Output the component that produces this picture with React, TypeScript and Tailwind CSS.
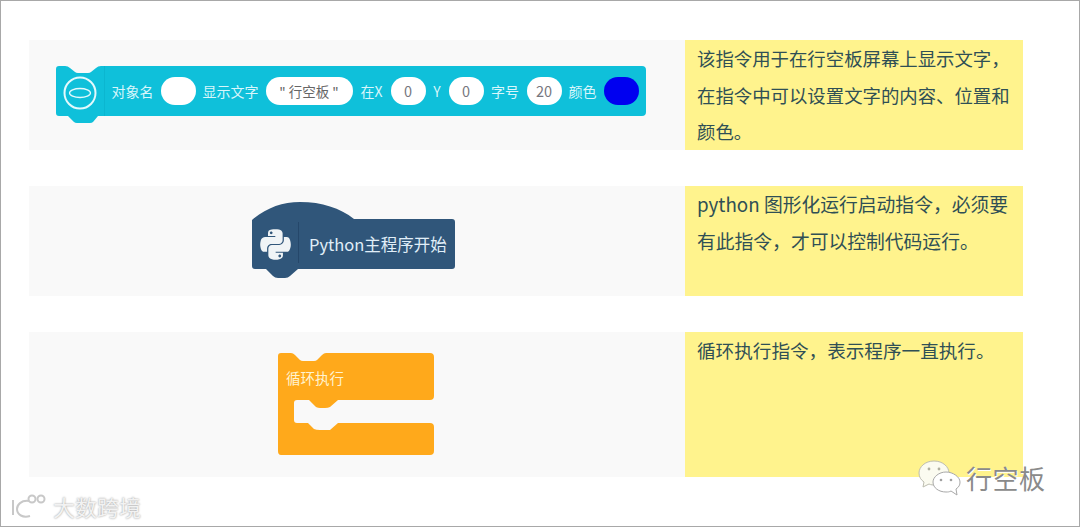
import React from "react";
import { FaPython } from "react-icons/fa";

const font = "[font-family:'Noto_Sans_CJK_SC','Noto_Sans',sans-serif]";

function Pill({ w, children, blue }: { w: string; children?: React.ReactNode; blue?: boolean }) {
  return (
    <div
      className={`${w} h-[28px] shrink-0 rounded-[14px] flex items-center justify-center text-[14.5px] text-[#77777f] ${
        blue ? "bg-[#0000f0]" : "bg-white"
      }`}
    >
      {children}
    </div>
  );
}

function Label({ children, w = "" }: { children: React.ReactNode; w?: string }) {
  return <span className={`${w} text-center text-[14px] leading-none text-[#d8f6fb] whitespace-nowrap shrink-0`}>{children}</span>;
}

function CyanBlock() {
  return (
    <div className="relative w-[590px] h-[58px] shrink-0 mr-[13px]">
      <svg className="absolute inset-0" width="590" height="58" viewBox="0 0 590 58">
        <path
          d="M3 0 H9 Q12 0 14 2 L19 6 Q20 7 22 7 H32 Q34 7 35 6 L40 2 Q42 0 45 0 H586 Q590 0 590 4 V46 Q590 50 586 50 H42 L37 56 Q36 57 34 57 H21 Q19 57 18 56 L12 50 H3 Q0 50 0 47 V3 Q0 0 3 0 Z"
          fill="#0fc0da"
        />
        <line x1="48.5" y1="0" x2="48.5" y2="50" stroke="#0bb6d0" strokeWidth="1" />
        <circle cx="24" cy="27" r="15.5" fill="none" stroke="#e4f9fc" strokeWidth="2" />
        <ellipse cx="24" cy="27" rx="10.5" ry="4.5" fill="none" stroke="#e4f9fc" strokeWidth="1.3" />
      </svg>
      <div className="relative flex items-center h-[50px] pl-[56px] gap-[7px]">
        <Label>对象名</Label>
        <Pill w="w-[35px]" />
        <Label>显示文字</Label>
        <Pill w="w-[87px]">
          <span className="text-[13.5px] text-[#666]">&quot; 行空板 &quot;</span>
        </Pill>
        <Label w="w-[24px]">在X</Label>
        <Pill w="w-[35px]">0</Pill>
        <Label w="w-[9px]">Y</Label>
        <Pill w="w-[35px]">0</Pill>
        <Label w="w-[29px]">字号</Label>
        <Pill w="w-[35px]">20</Pill>
        <Label>颜色</Label>
        <Pill w="w-[35px]" blue />
      </div>
    </div>
  );
}

function PythonBlock() {
  return (
    <div className="relative w-[204px] h-[78px] shrink-0 mr-[6px]">
      <svg className="absolute inset-0" width="204" height="78" viewBox="0 0 204 78">
        <path
          d="M0 18 C14 6 30 0 48 0 C70 0 88 6 102 17 H200 Q203 17 203 20 V64 Q203 67 200 67 H46 L38 74 Q36 76 33 76 H26 Q23 76 21 74 L14 67 H3 Q0 67 0 64 Z"
          fill="#30567a"
        />
        <line x1="46.5" y1="20" x2="46.5" y2="61" stroke="#25476a" strokeWidth="1" />
      </svg>
      <div className="relative flex items-center h-[50px] mt-[17px]">
        <div className="w-[46px] flex justify-center shrink-0">
          <FaPython className="text-[#f0f4f6]" size={35} />
        </div>
        <span className="ml-[11px] text-[16.5px] leading-none text-[#e0eef8] whitespace-nowrap">Python主程序开始</span>
      </div>
    </div>
  );
}

function LoopBlock() {
  return (
    <div className="relative w-[156px] h-[103px] shrink-0 mr-[2px]">
      <svg className="absolute inset-0" width="156" height="103" viewBox="0 0 156 103">
        <path
          d="M3 0 H13 Q15 0 17 2 L22 7 Q23 8 25 8 H36 Q38 8 39 7 L44 2 Q46 0 48 0 H152 Q156 0 156 4 V43 Q156 47 152 47 H60 L52 54 Q50 55 47 55 H42 Q38 55 36 52 L31 47 H19 Q16 47 16 50 V67 Q16 70 19 70 H30 L36 76 Q38 77 42 77 H52 L60 70 H152 Q156 70 156 74 V98 Q156 102 152 102 H3 Q0 102 0 98 V3 Q0 0 3 0 Z"
          fill="#ffa91b"
        />
      </svg>
      <div className="relative pl-[8px] pt-[15px] text-[14.5px] leading-[20px] text-[#fff3d0] whitespace-nowrap">循环执行</div>
    </div>
  );
}

function Row({ h, size, block, lines }: { h: string; size: string; block: React.ReactNode; lines: string[] }) {
  return (
    <div className={`flex ${h}`}>
      <div className="w-[656px] bg-[#f9f9f9] flex items-center justify-center shrink-0">{block}</div>
      <div className={`w-[338px] bg-[#fff38d] pl-[12px] ${size} leading-[36.5px] text-[#2f4f55] whitespace-nowrap`}>
        {lines.map((l) => (
          <div key={l}>{l}</div>
        ))}
      </div>
    </div>
  );
}

export default function App() {
  return (
    <div className={`relative w-[1080px] h-[527px] overflow-hidden bg-white border border-[#a8a8a8] ${font}`}>
      <div className="flex flex-col gap-[36px] pl-[28px] pt-[39px]">
        <Row h="h-[110px]" size="text-[18.4px]" block={<CyanBlock />} lines={["该指令用于在行空板屏幕上显示文字，", "在指令中可以设置文字的内容、位置和", "颜色。"]} />
        <Row h="h-[110px]" size="text-[18.8px]" block={<PythonBlock />} lines={["python 图形化运行启动指令，必须要", "有此指令，才可以控制代码运行。"]} />
        <Row h="h-[145px]" size="text-[18.6px]" block={<LoopBlock />} lines={["循环执行指令，表示程序一直执行。"]} />
      </div>

      <div className="absolute left-[916px] top-[458px] flex items-center">
        <svg width="46" height="38" viewBox="0 0 46 38" fill="none">
          <path
            d="M17 2 C8 2 2 8 2 14 C2 18 4 21 7 23 L6 28 L12 25 C14 26 16 26 18 26 C26 26 32 20 32 14 C32 8 26 2 17 2 Z"
            fill="#fbfbf0"
            stroke="#bdbdb0"
            strokeWidth="1"
          />
          <path
            d="M29 13 C22 13 16 18 16 23 C16 29 22 33 29 33 C31 33 32 33 34 32 L40 36 L39 30 C42 28 43 26 43 23 C43 18 36 13 29 13 Z"
            fill="#ffffff"
            stroke="#a8a8a8"
            strokeWidth="1"
          />
          <circle cx="12" cy="10" r="1.4" fill="#b0b0a0" />
          <circle cx="22" cy="10" r="1.4" fill="#b0b0a0" />
          <circle cx="24" cy="21" r="1.3" fill="#a0a0a0" />
          <circle cx="34" cy="21" r="1.3" fill="#a0a0a0" />
        </svg>
        <span className="ml-[3px] text-[26px] leading-none tracking-[0.5px] text-[#8a8a8a] [text-shadow:1px_1px_0_#ffffff]">行空板</span>
      </div>

      <div className="absolute left-[9px] top-[492px] flex items-center">
        <svg width="44" height="26" viewBox="0 0 44 26" fill="none" stroke="#c8c8c8" strokeWidth="2">
          <path d="M3 7 V22" />
          <path d="M19 8 C11 7 7 12 7 16 C7 22 13 25 20 23" />
          <circle cx="22" cy="6" r="3.5" />
          <circle cx="31" cy="6" r="3.5" />
        </svg>
        <span className="-ml-[1px] text-[22px] leading-none text-[#f2f2f2] [text-shadow:0_0_2px_#8f8f8f]">大数跨境</span>
      </div>
    </div>
  );
}
